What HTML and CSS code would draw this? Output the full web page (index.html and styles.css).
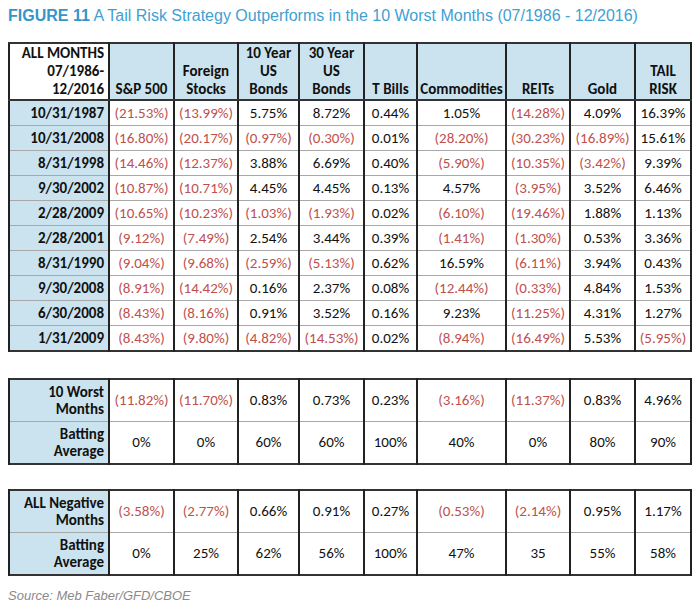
FILE: index.html
```html
<!DOCTYPE html>
<html>
<head>
<meta charset="utf-8">
<link rel="stylesheet" href="styles.css">
</head>
<body>
<div class="page">
  <h1 class="title"><b>FIGURE 11</b> A Tail Risk Strategy Outperforms in the 10 Worst Months (07/1986 - 12/2016)</h1>

  <table class="grid main">
    <colgroup>
      <col class="c0"><col class="c1"><col class="c2"><col class="c3"><col class="c4"><col class="c5"><col class="c6"><col class="c7"><col class="c8"><col class="c9">
    </colgroup>
    <thead>
      <tr>
        <th class="corner">ALL MONTHS<br>07/1986-<br>12/2016</th>
        <th>S&amp;P 500</th>
        <th>Foreign<br>Stocks</th>
        <th>10 Year<br>US<br>Bonds</th>
        <th>30 Year<br>US<br>Bonds</th>
        <th>T Bills</th>
        <th>Commodities</th>
        <th>REITs</th>
        <th>Gold</th>
        <th>TAIL<br>RISK</th>
      </tr>
    </thead>
    <tbody>
      <tr><td class="lbl">10/31/1987</td><td class="neg">(21.53%)</td><td class="neg">(13.99%)</td><td>5.75%</td><td>8.72%</td><td>0.44%</td><td>1.05%</td><td class="neg">(14.28%)</td><td>4.09%</td><td>16.39%</td></tr>
      <tr><td class="lbl">10/31/2008</td><td class="neg">(16.80%)</td><td class="neg">(20.17%)</td><td class="neg">(0.97%)</td><td class="neg">(0.30%)</td><td>0.01%</td><td class="neg">(28.20%)</td><td class="neg">(30.23%)</td><td class="neg">(16.89%)</td><td>15.61%</td></tr>
      <tr><td class="lbl">8/31/1998</td><td class="neg">(14.46%)</td><td class="neg">(12.37%)</td><td>3.88%</td><td>6.69%</td><td>0.40%</td><td class="neg">(5.90%)</td><td class="neg">(10.35%)</td><td class="neg">(3.42%)</td><td>9.39%</td></tr>
      <tr><td class="lbl">9/30/2002</td><td class="neg">(10.87%)</td><td class="neg">(10.71%)</td><td>4.45%</td><td>4.45%</td><td>0.13%</td><td>4.57%</td><td class="neg">(3.95%)</td><td>3.52%</td><td>6.46%</td></tr>
      <tr><td class="lbl">2/28/2009</td><td class="neg">(10.65%)</td><td class="neg">(10.23%)</td><td class="neg">(1.03%)</td><td class="neg">(1.93%)</td><td>0.02%</td><td class="neg">(6.10%)</td><td class="neg">(19.46%)</td><td>1.88%</td><td>1.13%</td></tr>
      <tr><td class="lbl">2/28/2001</td><td class="neg">(9.12%)</td><td class="neg">(7.49%)</td><td>2.54%</td><td>3.44%</td><td>0.39%</td><td class="neg">(1.41%)</td><td class="neg">(1.30%)</td><td>0.53%</td><td>3.36%</td></tr>
      <tr><td class="lbl">8/31/1990</td><td class="neg">(9.04%)</td><td class="neg">(9.68%)</td><td class="neg">(2.59%)</td><td class="neg">(5.13%)</td><td>0.62%</td><td>16.59%</td><td class="neg">(6.11%)</td><td>3.94%</td><td>0.43%</td></tr>
      <tr><td class="lbl">9/30/2008</td><td class="neg">(8.91%)</td><td class="neg">(14.42%)</td><td>0.16%</td><td>2.37%</td><td>0.08%</td><td class="neg">(12.44%)</td><td class="neg">(0.33%)</td><td>4.84%</td><td>1.53%</td></tr>
      <tr><td class="lbl">6/30/2008</td><td class="neg">(8.43%)</td><td class="neg">(8.16%)</td><td>0.91%</td><td>3.52%</td><td>0.16%</td><td>9.23%</td><td class="neg">(11.25%)</td><td>4.31%</td><td>1.27%</td></tr>
      <tr><td class="lbl">1/31/2009</td><td class="neg">(8.43%)</td><td class="neg">(9.80%)</td><td class="neg">(4.82%)</td><td class="neg">(14.53%)</td><td>0.02%</td><td class="neg">(8.94%)</td><td class="neg">(16.49%)</td><td>5.53%</td><td class="neg">(5.95%)</td></tr>
    </tbody>
  </table>

  <table class="grid summary">
    <colgroup>
      <col class="c0"><col class="c1"><col class="c2"><col class="c3"><col class="c4"><col class="c5"><col class="c6"><col class="c7"><col class="c8"><col class="c9">
    </colgroup>
    <tbody>
      <tr><td class="lbl">10 Worst<br>Months</td><td class="neg">(11.82%)</td><td class="neg">(11.70%)</td><td>0.83%</td><td>0.73%</td><td>0.23%</td><td class="neg">(3.16%)</td><td class="neg">(11.37%)</td><td>0.83%</td><td>4.96%</td></tr>
      <tr><td class="lbl">Batting<br>Average</td><td>0%</td><td>0%</td><td>60%</td><td>60%</td><td>100%</td><td>40%</td><td>0%</td><td>80%</td><td>90%</td></tr>
    </tbody>
  </table>

  <table class="grid summary">
    <colgroup>
      <col class="c0"><col class="c1"><col class="c2"><col class="c3"><col class="c4"><col class="c5"><col class="c6"><col class="c7"><col class="c8"><col class="c9">
    </colgroup>
    <tbody>
      <tr><td class="lbl">ALL Negative<br>Months</td><td class="neg">(3.58%)</td><td class="neg">(2.77%)</td><td>0.66%</td><td>0.91%</td><td>0.27%</td><td class="neg">(0.53%)</td><td class="neg">(2.14%)</td><td>0.95%</td><td>1.17%</td></tr>
      <tr><td class="lbl">Batting<br>Average</td><td>0%</td><td>25%</td><td>62%</td><td>56%</td><td>100%</td><td>47%</td><td>35</td><td>55%</td><td>58%</td></tr>
    </tbody>
  </table>

  <p class="source">Source: Meb Faber/GFD/CBOE</p>
</div>
</body>
</html>
```

FILE: styles.css
```css
html, body {
  margin: 0;
  padding: 0;
  background: #ffffff;
}

.page {
  padding: 0 0 0 8px;
  width: 682px;
}

.title {
  margin: 0;
  padding-top: 6px;
  height: 36px;
  box-sizing: border-box;
  font-family: "Liberation Sans", Arial, sans-serif;
  font-weight: normal;
  font-size: 16px;
  line-height: 20px;
  color: #3fa0d2;
  white-space: nowrap;
}

.title b {
  font-weight: bold;
  color: #3595c9;
}

.grid {
  border-collapse: collapse;
  table-layout: fixed;
  width: 682px;
  font-family: Carlito, Lato, "Open Sans", sans-serif;
  font-size: 15px;
  color: #111;
  border: 2px solid #333;
}

.grid td, .grid th {
  border-left: 2px solid #222;
  border-right: 2px solid #222;
  border-top: 1px solid #a8a8a8;
  border-bottom: 1px solid #a8a8a8;
  padding: 0;
  text-align: center;
  white-space: nowrap;
}

.c0 { width: 100px; }
.c1 { width: 65px; }
.c2 { width: 64px; }
.c3 { width: 61px; }
.c4 { width: 65px; }
.c5 { width: 53px; }
.c6 { width: 89px; }
.c7 { width: 64px; }
.c8 { width: 65px; }
.c9 { width: 56px; }

.main {
  margin-top: 6px;
}

.main thead th {
  height: 54px;
  background: #cbe3ee;
  font-weight: bold;
  line-height: 18px;
  vertical-align: bottom;
  padding-bottom: 1px;
  border-bottom: 2px solid #333;
  border-top: 2px solid #333;
}

.main thead th.corner {
  background: #ffffff;
  text-align: right;
  padding-right: 4px;
}

.main tbody td {
  height: 24px;
  line-height: 18px;
}

.grid td.lbl {
  background: #cbe3ee;
  text-align: right;
  font-weight: bold;
  padding-right: 4px;
}

.summary {
  margin-top: 26px;
}

.summary td {
  height: 41px;
  line-height: 17px;
}

.summary + .summary {
  margin-top: 24px;
}

.neg {
  color: #c0504d;
}

.source {
  margin: 12px 0 0 0;
  font-family: "Liberation Sans", Arial, sans-serif;
  font-style: italic;
  font-size: 13px;
  color: #8a8a8a;
}
```
